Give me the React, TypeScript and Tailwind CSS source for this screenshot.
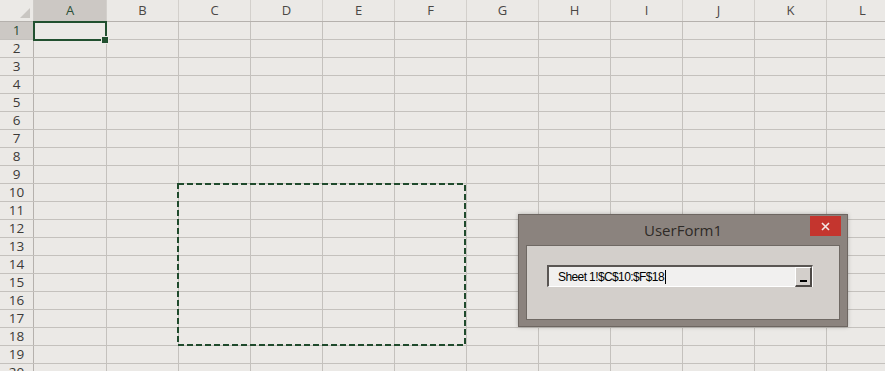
import React from "react";

const cols = ["A", "B", "C", "D", "E", "F", "G", "H", "I", "J", "K", "L"];
const rows = Array.from({ length: 20 }, (_, i) => i + 1);

const App: React.FC = () => {
  return (
    <div className="relative w-[885px] h-[371px] overflow-hidden bg-[#ebe9e6] font-['Open_Sans',sans-serif]">
      {/* column header */}
      <div className="flex h-[22px] border-b border-[#b5b1ad]">
        <div className="relative w-[34px] shrink-0 border-r border-[#cfccc8]">
          <div className="absolute right-[3px] bottom-[3px] w-0 h-0 border-l-[10px] border-l-transparent border-b-[10px] border-b-[#c9c6c2]" />
        </div>
        {cols.map((c, i) => (
          <div
            key={c}
            className={`${i === 0 ? "w-[73px] bg-[#ccc8c4] text-[#2b4f37]" : "w-[72px] text-[#4a4745]"} shrink-0 border-r border-[#d3d0cc] flex items-center justify-center text-[13px] leading-none`}
          >
            {c}
          </div>
        ))}
      </div>

      {/* rows */}
      {rows.map((r) => (
        <div key={r} className="flex h-[18px] border-b border-[#c4c1bd]">
          <div
            className={`${r === 1 ? "bg-[#ccc8c4] text-[#2b4f37]" : "text-[#3c3a38]"} w-[34px] shrink-0 border-r border-[#b5b1ad] flex items-center justify-center text-[13.5px] leading-none`}
          >
            {r}
          </div>
          {cols.map((c, i) => (
            <div
              key={c}
              className={`${i === 0 ? "w-[73px]" : "w-[72px]"} shrink-0 border-r border-[#c4c1bd]`}
            />
          ))}
        </div>
      ))}

      {/* active cell A1 */}
      <div className="absolute left-[33px] top-[21px] w-[74px] h-[20px] border-2 border-[#21502f]" />
      <div className="absolute left-[102px] top-[37px] w-[6px] h-[6px] bg-[#21502f] outline outline-1 outline-[#ebe9e6]" />

      {/* copy marquee C10:F18 */}
      <svg className="absolute left-0 top-0" width="885" height="371">
        <rect
          x="178"
          y="184"
          width="287"
          height="161"
          fill="none"
          stroke="#1f4a2c"
          strokeWidth="2"
          strokeDasharray="6 3"
        />
      </svg>

      {/* UserForm1 */}
      <div className="absolute left-[518px] top-[214px] w-[330px] h-[113px] bg-[#8b837e] border border-[#6d6661] shadow-[0_0_4px_rgba(0,0,0,0.25)] flex flex-col px-[7px] pb-[6px]">
        <div className="relative h-[30px] shrink-0 flex items-center justify-center">
          <span className="text-[15px] text-[#2e2a27] font-['Open_Sans',sans-serif]">
            UserForm1
          </span>
          <div className="absolute right-[-1px] top-[1px] w-[31px] h-[20px] bg-[#c4352e] flex items-center justify-center">
            <svg width="9" height="9" viewBox="0 0 9 9">
              <path d="M1 1 L8 8 M8 1 L1 8" stroke="#f3e8e6" strokeWidth="1.6" />
            </svg>
          </div>
        </div>
        <div className="flex-1 bg-[#d3cfcb] border border-[#6f6964] pt-[19px] pl-[20px]">
          <div className="flex w-[266px] h-[22px] border-t-2 border-l-2 border-t-[#5a5653] border-l-[#5a5653] border-b border-r border-b-white border-r-white bg-[#f1f0ef]">
            <div className="flex-1 flex items-center pl-[9px] text-[12px] tracking-[-0.6px] text-black font-['Liberation_Sans',Arial,sans-serif]">
              Sheet 1!$C$10:$F$18
              <span className="inline-block w-px h-[14px] bg-black ml-[1px]" />
            </div>
            <div className="w-[17px] h-[20px] bg-[#d3cfcb] border-t border-l border-t-white border-l-white border-b-2 border-r-2 border-b-[#4e4a47] border-r-[#4e4a47] flex items-end justify-center pb-[3px]">
              <div className="w-[7px] h-[2px] bg-black" />
            </div>
          </div>
        </div>
      </div>
    </div>
  );
};

export default App;
